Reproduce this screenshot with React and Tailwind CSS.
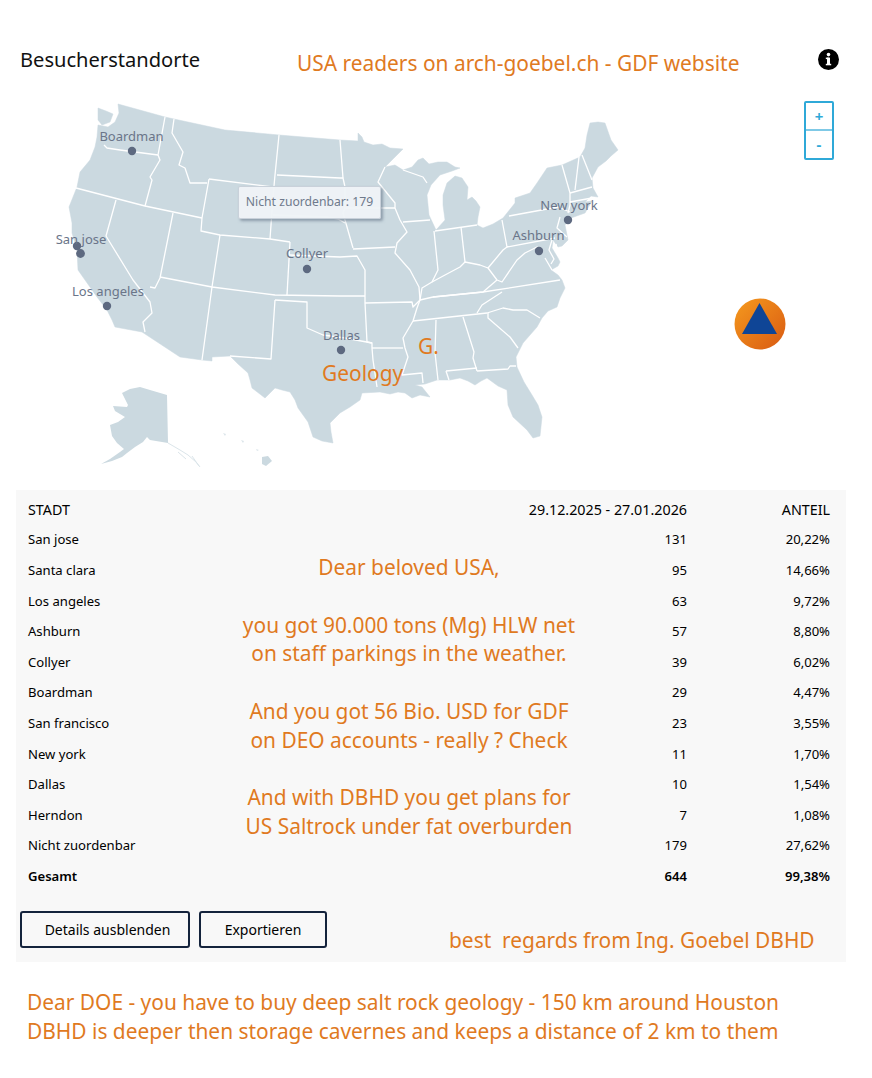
const mainland = `M118,104 L165,117 L174,119 L225,130 L279,135 L340,140 L358,141 L358,133 L362,137 L364,142 L373,145 L382,144 L390,148 L403,149 L394,158 L385,167 L395,165 L403,170 L412,167 L418,160 L423,158 L429,164 L438,162 L447,162 L455,167 L460,168 L452,171 L440,175 L431,185 L427,195 L429,215 L436,230 L445,220 L443,205 L443,195 L447,183 L455,176 L462,178 L468,187 L467,200 L472,197 L476,201 L480,207 L478,217 L477,225 L483,228 L493,224 L503,218 L515,203 L515,198 L530,193 L537,183 L547,168 L562,165 L580,157 L585,148 L587,135 L590,123 L598,122 L605,123 L611,140 L618,150 L611,156 L606,161 L598,167 L592,178 L593,188 L598,197 L591,196 L585,202 L592,201 L585,213 L571,218 L567,222 L565,225 L568,240 L562,246 L558,247 L553,240 L552,248 L558,258 L560,262 L558,266 L551,270 L558,275 L562,280 L565,288 L560,298 L557,307 L548,311 L542,318 L537,327 L530,335 L523,343 L516,357 L517,367 L524,382 L532,395 L538,405 L542,417 L540,436 L533,438 L527,430 L513,417 L508,405 L507,390 L498,386 L487,378 L481,381 L475,385 L468,381 L460,378 L450,380 L437,380 L425,384 L415,385 L422,387 L430,397 L420,395 L412,398 L405,393 L398,392 L390,394 L380,392 L362,393 L360,400 L350,407 L340,413 L330,423 L331,432 L333,443 L322,441 L313,437 L308,422 L298,408 L295,400 L290,392 L282,390 L275,388 L265,398 L252,388 L250,380 L248,373 L238,364 L230,356 L212,357 L212,361 L202,360 L180,357 L142,332 L115,327 L112,320 L107,310 L97,297 L85,280 L78,270 L77,250 L72,233 L72,223 L69,207 L77,187 L80,172 L90,160 L95,147 L97,137 L98,125 L108,127 L115,122 L119,113 Z M98,108 L106,111 L113,114 L110,122 L102,125 L98,120 Z`;

const borders = [
  "M104,145 L107,148 L120,150 L158,155",
  "M165,117 L158,155 L160,160 L150,177 L152,180 L145,206",
  "M174,119 L172,133 L183,152 L179,165 L185,168 L190,183 L207,183",
  "M209,179 L202,218 L201,231 L220,235 L270,239 L290,242",
  "M209,179 L273,187",
  "M76,188 L145,206 L202,218",
  "M116,200 L106,236 L133,280 L150,302 L152,313 L143,322 L145,332",
  "M173,213 L160,278 L155,288 L150,287",
  "M160,277 L212,287 L275,295 L340,296 L365,296",
  "M220,235 L212,287 L202,360",
  "M279,135 L275,175 L273,197 L270,239",
  "M277,175 L340,178 L343,178",
  "M340,140 L343,178 L345,187 L345,208 L343,213 L353,248",
  "M273,215 L327,217 L338,219 L345,223",
  "M345,208 L395,208",
  "M290,242 L287,295",
  "M289,255 L340,257 L357,256 L365,270 L365,303",
  "M353,249 L395,247",
  "M385,167 L378,182 L395,203 L395,208 L400,220 L407,232 L397,243 L395,253 L410,270 L419,287 L420,300 L417,308 L413,321 L403,338 L405,348 L408,357 L402,375 L422,373 L423,383",
  "M403,222 L430,220",
  "M434,231 L438,270 L432,282 L422,288 L420,300",
  "M435,231 L477,225",
  "M461,227 L465,262",
  "M432,282 L445,275 L460,267 L465,262 L480,265 L488,268 L503,250 L507,247",
  "M502,220 L507,247 L555,238",
  "M509,216 L558,207 L570,212",
  "M488,268 L497,280 L502,282 L517,260 L525,253 L537,247 L543,252",
  "M420,300 L433,297 L483,292 L497,280",
  "M433,297 L483,292 L560,280",
  "M365,303 L412,302 L413,307 L420,300",
  "M372,348 L403,348",
  "M365,303 L367,342 L372,343 L372,348 L373,360 L377,387",
  "M275,300 L307,302 L307,328 L323,335 L345,338 L372,343",
  "M275,300 L271,359 L230,356",
  "M413,321 L487,313",
  "M477,313 L482,305 L502,292",
  "M487,313 L503,308 L513,310 L527,310 L540,318",
  "M488,313 L488,318 L510,337 L518,348",
  "M436,320 L435,353 L438,380",
  "M463,317 L474,352 L473,358 L477,371",
  "M446,371 L477,368",
  "M446,371 L449,380",
  "M477,371 L508,369 L510,366 L516,366",
  "M562,165 L570,193 L570,205 L568,213",
  "M579,157 L575,190",
  "M582,155 L592,180",
  "M570,193 L592,187",
  "M570,202 L592,198",
  "M560,217 L557,228 L567,237",
  "M403,170 L423,177 L427,183",
  "M552,240 L549,250 L554,259 L551,264 M556,244 L558,254 M545,258 L552,270",
];

const alaska = "M167,395 L168,443 L150,440 L147,437 L143,442 L135,447 L127,453 L122,457 L112,461 L101,464 L110,459 L120,452 L124,449 L117,443 L112,436 L110,425 L118,422 L125,417 L115,411 L113,406 L127,407 L128,405 L122,393 L130,389 L140,387 L150,390 Z";

const pins = [
  { label: "Boardman", lx: 131.5, ly: 141, x: 132, y: 151 },
  { label: "San jose", lx: 81, ly: 244, x: 77, y: 246 },
  { label: "Los angeles", lx: 108, ly: 296, x: 107, y: 306 },
  { label: "Collyer", lx: 307, ly: 258, x: 307, y: 269 },
  { label: "Dallas", lx: 341.5, ly: 340, x: 341, y: 350 },
  { label: "Ashburn", lx: 538.5, ly: 240, x: 539, y: 251 },
  { label: "New york", lx: 569, ly: 210, x: 568, y: 220 },
];

const rows = [
  ["San jose", "131", "20,22%"],
  ["Santa clara", "95", "14,66%"],
  ["Los angeles", "63", "9,72%"],
  ["Ashburn", "57", "8,80%"],
  ["Collyer", "39", "6,02%"],
  ["Boardman", "29", "4,47%"],
  ["San francisco", "23", "3,55%"],
  ["New york", "11", "1,70%"],
  ["Dallas", "10", "1,54%"],
  ["Herndon", "7", "1,08%"],
  ["Nicht zuordenbar", "179", "27,62%"],
];

function Row({ cells, bold }) {
  return (
    <div className={`flex h-[30.6px] items-center text-[13.1px] text-black ${bold ? "font-semibold" : ""}`}>
      <div className="flex-1">{cells[0]}</div>
      <div className="w-[300px] text-right">{cells[1]}</div>
      <div className="w-[143px] text-right">{cells[2]}</div>
    </div>
  );
}

export default function App() {
  return (
    <div className="relative w-[872px] h-[1078px] bg-white font-['Noto_Sans','Open_Sans',sans-serif] overflow-hidden">
      <header className="relative flex h-[90px] items-start pl-5 pt-[45px]">
        <h1 className="text-[20.1px] leading-[30px] text-[#111111] font-normal">Besucherstandorte</h1>
        <div className="absolute left-[297px] top-[47px] text-[20.9px] leading-[32px] text-[#e07a1f]">
          USA readers on arch-goebel.ch - GDF website
        </div>
        <svg className="absolute left-[818px] top-[49px]" width="21" height="21" viewBox="0 0 21 21">
          <circle cx="10.5" cy="10.5" r="10.5" fill="#000" />
          <circle cx="10.5" cy="5.6" r="1.8" fill="#fff" />
          <rect x="9" y="8.6" width="3" height="7.4" fill="#fff" />
          <rect x="7.8" y="8.6" width="3" height="1.5" fill="#fff" />
          <rect x="7.8" y="14.8" width="5.4" height="1.5" fill="#fff" />
        </svg>
      </header>

      <section className="relative h-[400px]">
        <svg className="block" width="872" height="400" viewBox="0 90 872 400">
          <path d={mainland} fill="#cbd9e0" fillRule="evenodd" stroke="#cbd9e0" strokeWidth="0.5" />
          {borders.map((d, i) => (
            <path key={i} d={d} fill="none" stroke="#ffffff" strokeWidth="1.3" strokeLinejoin="round" />
          ))}
          <path d={alaska} fill="#cbd9e0" />
          <path d="M168,443 L180,450 L188,455 L196,462 L200,467 M178,452 L186,459 M192,456 L199,466" fill="none" stroke="#dbe5ea" strokeWidth="1" />
          <path d="M262,457 L268,456 L272,461 L266,466 L262,464 Z" fill="#cbd9e0" />
          <path d="M223,433 L226,434 L225,436 Z M241,440 L244,441 L243,443 Z M256,449 L259,450 L257,451 Z" fill="#dbe5ea" />
          {pins.map((p) => (
            <g key={p.label}>
              <circle cx={p.x} cy={p.y} r="4.2" fill="#5d6980" />
              <text x={p.lx} y={p.ly} textAnchor="middle" fontSize="13" fill="#6a7589" fontFamily="'Noto Sans', sans-serif">
                {p.label}
              </text>
            </g>
          ))}
          <circle cx="80.5" cy="253.5" r="4.4" fill="#5d6980" />
        </svg>

        <div className="absolute left-[238px] top-[96px] flex h-[33px] w-[143px] items-center justify-center rounded-[2px] border border-[#c9d1da] bg-[#eff3f7]/95 text-[12.2px] text-[#6f7a8c] shadow-[2px_2px_3px_rgba(90,105,125,0.55)]">
          Nicht zuordenbar: 179
        </div>

        <div className="absolute left-[804px] top-[11px] flex w-[30px] flex-col rounded-[2px] border-2 border-[#2fa9d8] bg-white text-[15px] font-bold text-[#2fa9d8]">
          <div className="flex h-[28px] items-center justify-center border-b-2 border-[#7fc9e6]">+</div>
          <div className="flex h-[27px] items-center justify-center">-</div>
        </div>

        <svg className="absolute left-[734px] top-[208px]" width="52" height="52" viewBox="0 0 52 52">
          <defs>
            <linearGradient id="orb" x1="0" y1="0" x2="1" y2="1">
              <stop offset="0" stopColor="#f59a1e" />
              <stop offset="1" stopColor="#d95a12" />
            </linearGradient>
          </defs>
          <circle cx="26" cy="26" r="25.5" fill="url(#orb)" />
          <polygon points="25.5,5 8,36 43,36" fill="#0f4596" />
        </svg>

        <div className="absolute left-[418px] top-[240px] text-[20.9px] leading-[32px] text-[#e07a1f]">G.</div>
        <div className="absolute left-[322px] top-[267px] text-[20.9px] leading-[32px] text-[#e07a1f]">Geology</div>
      </section>

      <section className="relative ml-4 h-[472px] w-[830px] bg-[#f8f8f8] pl-3 pr-[16px] pt-[4.4px]">
        <div className="flex h-[30.6px] items-center text-[14.3px] text-black">
          <div className="flex-1">STADT</div>
          <div className="w-[300px] text-right">29.12.2025 - 27.01.2026</div>
          <div className="w-[143px] text-right">ANTEIL</div>
        </div>
        {rows.map((r) => (
          <Row key={r[0]} cells={r} />
        ))}
        <Row cells={["Gesamt", "644", "99,38%"]} bold />

        <div className="absolute left-0 top-[63px] w-[786px] text-center text-[20.9px] leading-[28.8px] text-[#e07a1f]">
          <div>Dear beloved USA,</div>
          <div className="h-[28.8px]" />
          <div>you got 90.000 tons (Mg) HLW net</div>
          <div>on staff parkings in the weather.</div>
          <div className="h-[28.8px]" />
          <div>And you got 56 Bio. USD for GDF</div>
          <div>on DEO accounts - really ? Check</div>
          <div className="h-[28.8px]" />
          <div>And with DBHD you get plans for</div>
          <div>US Saltrock under fat overburden</div>
        </div>

        <div className="mt-[19px] -ml-2 flex items-start">
          <button className="h-[37px] w-[170px] rounded-[3px] border-2 border-[#14233c] pl-[5px] text-[14px] text-black">
            Details ausblenden
          </button>
          <button className="ml-[9px] h-[37px] w-[128px] rounded-[3px] border-2 border-[#14233c] text-[14px] text-black">
            Exportieren
          </button>
          <div className="ml-[122px] mt-[15px] whitespace-pre text-[20.9px] leading-[28px] text-[#e07a1f]">
            best  regards from Ing. Goebel DBHD
          </div>
        </div>
      </section>

      <footer className="pl-[27px] pt-[26px] text-[20.9px] leading-[29px] text-[#e07a1f]">
        <div>Dear DOE - you have to buy deep salt rock geology - 150 km around Houston</div>
        <div>DBHD is deeper then storage cavernes and keeps a distance of 2 km to them</div>
      </footer>
    </div>
  );
}
